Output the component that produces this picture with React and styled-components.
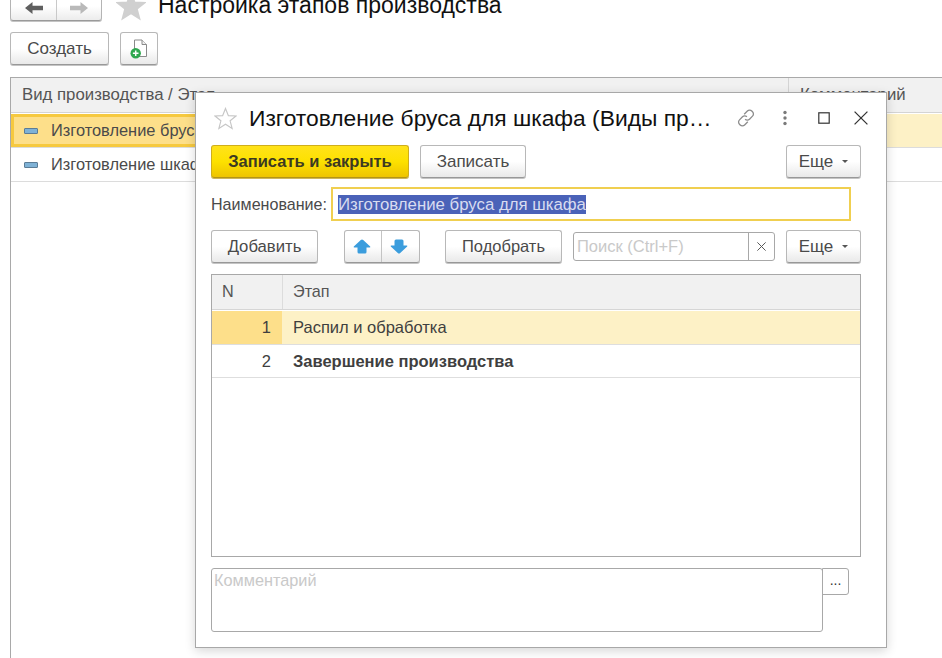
import React from "react";
import styled, { createGlobalStyle } from "styled-components";

const Global = createGlobalStyle`
  html, body { margin: 0; padding: 0; background: #fff; overflow: hidden; }
  body { font-family: "Liberation Sans", Arial, sans-serif; color: #4b4b4b; }
  * { box-sizing: border-box; }
`;

const Page = styled.div`
  position: relative;
  width: 942px;
  height: 658px;
  overflow: hidden;
  background: #fff;
`;

const Main = styled.div`
  display: flex;
  flex-direction: column;
  padding-left: 10px;
  margin-top: -12px;
`;

const TitleBar = styled.div`
  display: flex;
  align-items: center;
  height: 33px;
`;

const NavGroup = styled.div`
  display: flex;
  width: 92px;
  height: 33px;
  border: 1px solid #b4b4b4;
  border-bottom-color: #9a9a9a;
  border-radius: 3px;
  background: linear-gradient(#fff 55%, #ececec);
  box-shadow: 0 1px 0 #c4c4c4;
`;

const NavCell = styled.div`
  display: flex;
  align-items: center;
  justify-content: center;
  width: ${(p) => p.$w}px;
  padding-top: 6px;
  & + & { border-left: 1px solid #c9c9c9; }
`;

const MainTitle = styled.div`
  margin-left: 12px;
  font-size: 23px;
  color: #111;
  line-height: 33px;
  white-space: nowrap;
  transform: translateY(1px);
`;

const StarSlot = styled.div`
  display: flex;
  margin-left: 14px;
  margin-top: 3px;
`;

const CommandBar = styled.div`
  display: flex;
  gap: 11px;
  margin-top: 11px;
`;

const Button = styled.div`
  display: flex;
  align-items: center;
  justify-content: center;
  height: 33px;
  width: ${(p) => p.$w}px;
  font-size: ${(p) => p.$fs || 16.7}px;
  color: #4a4a4a;
  border: 1px solid #b8b8b8;
  border-bottom-color: #989898;
  border-radius: 3px;
  background: linear-gradient(#fff 50%, #e9e9e9);
  box-shadow: 0 1px 0 #c4c4c4;
  flex: none;
`;

const SpacedButton = styled(Button)`
  margin-left: ${(p) => p.$ml}px;
`;

const BackTable = styled.div`
  margin-top: 12px;
  width: 940px;
  height: 600px;
  border: 1px solid #a9a9a9;
  border-right: none;
  border-bottom: none;
`;

const BackHeader = styled.div`
  display: grid;
  grid-template-columns: 777px 1fr;
  height: 35px;
  background: #f1f1f1;
  border-bottom: 1px solid #d4d4d4;
  font-size: 16.8px;
  line-height: 33px;
  color: #555;
`;

const BackHeadCell = styled.div`
  padding-left: 11px;
  white-space: nowrap;
  & + & { border-left: 1px solid #d4d4d4; }
`;

const BackRow = styled.div`
  display: grid;
  grid-template-columns: 777px 1fr;
  height: 34px;
  border-bottom: 1px solid #dcdcdc;
  margin-top: ${(p) => (p.$first ? 1 : 0)}px;
  font-size: 16.4px;
  color: #4a4a4a;
`;

const BackName = styled.div`
  display: flex;
  align-items: center;
  gap: 13px;
  background: ${(p) => (p.$sel ? "#fddf8a" : "#fff")};
  border: ${(p) => (p.$sel ? "3px solid #f6c93f" : "none")};
  padding-left: ${(p) => (p.$sel ? 10 : 13)}px;
`;

const BackComment = styled.div`
  background: ${(p) => (p.$sel ? "#fdf1c6" : "#fff")};
`;

const Dash = styled.span`
  width: 14px;
  height: 6px;
  background: #7fb2d6;
  border: 1px solid #5b7c96;
  border-radius: 1px;
  flex: none;
`;

const Modal = styled.div`
  position: absolute;
  left: 195px;
  top: 92px;
  width: 692px;
  height: 556px;
  background: #fff;
  border: 1px solid #a8a8a8;
  box-shadow: 0 3px 10px rgba(0, 0, 0, 0.16);
  display: flex;
  flex-direction: column;
  padding: 0 25px 0 15px;
`;

const ModalHead = styled.div`
  display: flex;
  align-items: center;
  height: 50px;
  margin-bottom: 2px;
  margin-right: -25px;
`;

const ModalStar = styled.div`
  display: flex;
  margin-left: 3px;
  flex: none;
`;

const ModalTitle = styled.div`
  margin-left: 12px;
  width: 468px;
  flex: none;
  font-size: 22.8px;
  color: #111;
  white-space: nowrap;
  overflow: hidden;
  text-overflow: ellipsis;
`;

const HeadIcons = styled.div`
  display: flex;
  align-items: center;
  margin-left: 16px;
  flex: none;
`;

const IconSlot = styled.div`
  display: flex;
  align-items: center;
  justify-content: center;
  width: ${(p) => p.$w}px;
  flex: none;
`;

const Row = styled.div`
  display: flex;
  align-items: center;
  margin-top: ${(p) => p.$mt || 0}px;
`;

const PrimaryButton = styled(Button)`
  background: linear-gradient(#ffe21a 0%, #fde100 50%, #eec400 100%);
  border-color: #cfae1c;
  border-bottom-color: #b39416;
  color: #3c3a22;
  font-weight: bold;
  box-shadow: 0 1px 0 #cdb65a;
`;

const Spring = styled.div`
  flex: 1;
`;

const MoreCaret = styled.span`
  width: 0;
  height: 0;
  margin-left: 9px;
  border-left: 3px solid transparent;
  border-right: 3px solid transparent;
  border-top: 3px solid #555;
`;

const Label = styled.div`
  width: 120px;
  font-size: 16.1px;
  color: #4a4a4a;
  flex: none;
`;

const NameInput = styled.div`
  display: flex;
  align-items: center;
  width: 520px;
  height: 34px;
  border: 2px solid #f0cf50;
  padding-left: 5px;
  font-size: 16.8px;
`;

const Selected = styled.span`
  background: #4a62b8;
  color: #d8dcf0;
  line-height: 19px;
`;

const Group = styled.div`
  display: flex;
  width: 76px;
  height: 33px;
  margin-left: 26px;
  border: 1px solid #b8b8b8;
  border-bottom-color: #989898;
  border-radius: 3px;
  background: linear-gradient(#fff 50%, #e9e9e9);
  box-shadow: 0 1px 0 #c4c4c4;
`;

const GroupCell = styled.div`
  flex: 1;
  display: flex;
  align-items: center;
  justify-content: center;
  padding-right: 1px;
  & + & { border-left: 1px solid #c4c4c4; padding-right: 3px; }
`;

const Search = styled.div`
  display: flex;
  width: 202px;
  height: 29px;
  margin-left: 11px;
  border: 1px solid #a8a8a8;
  border-radius: 3px;
  font-size: 16.5px;
  color: #c9c9c9;
  flex: none;
`;

const SearchText = styled.div`
  flex: 1;
  padding-left: 3px;
  line-height: 27px;
  white-space: nowrap;
`;

const SearchClear = styled.div`
  width: 26px;
  display: flex;
  align-items: center;
  justify-content: center;
  border-left: 1px solid #a8a8a8;
`;

const Table = styled.div`
  margin-top: 11px;
  width: 650px;
  height: 283px;
  border: 1px solid #a8a8a8;
  display: flex;
  flex-direction: column;
`;

const THead = styled.div`
  display: grid;
  grid-template-columns: 70px 1fr;
  height: 35px;
  background: #f1f1f1;
  border-bottom: 1px solid #d6d6d6;
  font-size: 16.2px;
  line-height: 33px;
  color: #555;
`;

const THCell = styled.div`
  padding-left: 10px;
  & + & { border-left: 1px solid #dcdcdc; }
`;

const TRow = styled.div`
  display: grid;
  grid-template-columns: 70px 1fr;
  height: ${(p) => (p.$sel ? 34 : 33)}px;
  margin-top: ${(p) => (p.$sel ? 1 : 0)}px;
  border-bottom: 1px solid #dedede;
  font-size: 16.5px;
  line-height: 32px;
  color: #3f3f3f;
  font-weight: ${(p) => (p.$bold ? "bold" : "normal")};
`;

const NumCell = styled.div`
  text-align: right;
  padding-right: 11px;
  font-weight: normal;
  background: ${(p) => (p.$sel ? "#fddf8a" : "#fff")};
`;

const TextCell = styled.div`
  padding-left: 11px;
  background: ${(p) => (p.$sel ? "#fdf1c6" : "#fff")};
`;

const CommentRow = styled.div`
  display: flex;
  align-items: flex-start;
  margin-top: 11px;
`;

const CommentBox = styled.div`
  width: 612px;
  height: 64px;
  border: 1px solid #a8a8a8;
  border-radius: 3px;
  padding: 2px 0 0 2px;
  font-size: 16.3px;
  color: #c9c9c9;
`;

const DotsButton = styled.div`
  width: 27px;
  height: 27px;
  margin-left: -1px;
  border: 1px solid #a8a8a8;
  border-radius: 0 3px 3px 0;
  font-size: 14px;
  text-align: center;
  line-height: 22px;
  color: #333;
`;

const ArrowIcon = ({ flip, color }) => (
  <svg width="20" height="14" viewBox="0 0 20 14" style={{ transform: flip ? "scaleX(-1)" : "none" }}>
    <path d="M1 7 L8.5 1 V4.8 H19 V9.2 H8.5 V13 Z" fill={color} />
  </svg>
);

const Star = ({ size, filled }) => (
  <svg width={size} height={size} viewBox="0 0 24 24">
    <path
      d="M12 1.5 L15 9 L23 9.4 L16.8 14.4 L18.9 22.3 L12 17.9 L5.1 22.3 L7.2 14.4 L1 9.4 L9 9 Z"
      fill={filled ? "#d0d0d0" : "#fff"}
      stroke={filled ? "#d0d0d0" : "#c6c6c6"}
      strokeWidth="1.2"
    />
  </svg>
);

const NewDocIcon = () => (
  <svg width="18" height="20" viewBox="0 0 18 20">
    <path d="M4.5 1 H12 L16.5 5.5 V17.5 H4.5 Z" fill="#fff" stroke="#8a8a8a" />
    <path d="M12 1 V5.5 H16.5" fill="#eee" stroke="#8a8a8a" />
    <circle cx="5.7" cy="14.2" r="5.2" fill="#2fa84f" />
    <path d="M5.7 11.4 V17 M2.9 14.2 H8.5" stroke="#fff" strokeWidth="1.5" />
  </svg>
);

const BlockArrow = ({ down }) => (
  <svg width="18" height="15" viewBox="0 0 18 15" style={{ transform: down ? "rotate(180deg)" : "none" }}>
    <path d="M9 0.5 Q9.6 0.5 10.2 1 L17.2 7.4 Q17.8 8.5 16.6 8.5 H13.5 V13 Q13.5 14.5 12 14.5 H6 Q4.5 14.5 4.5 13 V8.5 H1.4 Q0.2 8.5 0.8 7.4 L7.8 1 Q8.4 0.5 9 0.5 Z" fill="#3b9ddd" />
  </svg>
);

const LinkIcon = () => (
  <svg width="20" height="20" viewBox="0 0 20 20" fill="none" stroke="#8c8c8c" strokeWidth="1.3">
    <path d="M8.2 6.3 L11.4 3 a3.1 3.1 0 0 1 4.4 0 l0.7 0.7 a3.1 3.1 0 0 1 0 4.4 L13.5 11.2 a3.1 3.1 0 0 1 -4.4 0" />
    <path d="M11.8 13.7 L8.6 17 a3.1 3.1 0 0 1 -4.4 0 l-0.7 -0.7 a3.1 3.1 0 0 1 0 -4.4 L6.5 8.8 a3.1 3.1 0 0 1 4.4 0" />
  </svg>
);

const DotsIcon = () => (
  <svg width="4" height="16" viewBox="0 0 4 16" fill="#7a7a7a">
    <circle cx="2" cy="2.5" r="1.7" />
    <circle cx="2" cy="8" r="1.7" />
    <circle cx="2" cy="13.5" r="1.7" />
  </svg>
);

const CloseIcon = ({ size, color, w }) => (
  <svg width={size} height={size} viewBox="0 0 12 12" stroke={color} strokeWidth={w} fill="none">
    <path d="M0.5 0.5 L11.5 11.5 M11.5 0.5 L0.5 11.5" />
  </svg>
);

const SquareIcon = () => (
  <svg width="12" height="12" viewBox="0 0 12 12" fill="none" stroke="#333" strokeWidth="1.2">
    <rect x="0.8" y="0.8" width="10.4" height="10.4" />
  </svg>
);

export default function App() {
  return (
    <Page>
      <Global />
      <Main>
        <TitleBar>
          <NavGroup>
            <NavCell $w={45}><ArrowIcon color="#5f5f5f" /></NavCell>
            <NavCell $w={45}><ArrowIcon flip color="#b9b9b9" /></NavCell>
          </NavGroup>
          <StarSlot><Star size={30} filled /></StarSlot>
          <MainTitle>Настройка этапов производства</MainTitle>
        </TitleBar>
        <CommandBar>
          <Button $w={99} $fs={17}>Создать</Button>
          <Button $w={38}><NewDocIcon /></Button>
        </CommandBar>
        <BackTable>
          <BackHeader>
            <BackHeadCell>Вид производства / Этап</BackHeadCell>
            <BackHeadCell>Комментарий</BackHeadCell>
          </BackHeader>
          <BackRow $first>
            <BackName $sel><Dash />Изготовление бруса для шкафа</BackName>
            <BackComment $sel />
          </BackRow>
          <BackRow>
            <BackName><Dash />Изготовление шкафа</BackName>
            <BackComment />
          </BackRow>
        </BackTable>
      </Main>

      <Modal>
        <ModalHead>
          <ModalStar><Star size={23} /></ModalStar>
          <ModalTitle>Изготовление бруса для шкафа (Виды производства)</ModalTitle>
          <HeadIcons>
            <IconSlot $w={26}><LinkIcon /></IconSlot>
            <IconSlot $w={52}><DotsIcon /></IconSlot>
            <IconSlot $w={26}><SquareIcon /></IconSlot>
            <IconSlot $w={48}><CloseIcon size={14} color="#333" w={1.1} /></IconSlot>
          </HeadIcons>
        </ModalHead>
        <Row>
          <PrimaryButton $w={198} $fs={16.5}>Записать и закрыть</PrimaryButton>
          <SpacedButton $w={106} $ml={11} $fs={17}>Записать</SpacedButton>
          <Spring />
          <Button $w={75} $fs={17}>Еще<MoreCaret /></Button>
        </Row>
        <Row $mt={9}>
          <Label>Наименование:</Label>
          <NameInput><Selected>Изготовление бруса для шкафа</Selected></NameInput>
        </Row>
        <Row $mt={9}>
          <Button $w={107}>Добавить</Button>
          <Group>
            <GroupCell><BlockArrow /></GroupCell>
            <GroupCell><BlockArrow down /></GroupCell>
          </Group>
          <SpacedButton $w={117} $ml={25} $fs={16.5}>Подобрать</SpacedButton>
          <Search>
            <SearchText>Поиск (Ctrl+F)</SearchText>
            <SearchClear><CloseIcon size={9} color="#555" w={1.3} /></SearchClear>
          </Search>
          <Spring />
          <Button $w={75} $fs={17}>Еще<MoreCaret /></Button>
        </Row>
        <Table>
          <THead>
            <THCell>N</THCell>
            <THCell>Этап</THCell>
          </THead>
          <TRow $sel>
            <NumCell $sel>1</NumCell>
            <TextCell $sel>Распил и обработка</TextCell>
          </TRow>
          <TRow $bold>
            <NumCell>2</NumCell>
            <TextCell>Завершение производства</TextCell>
          </TRow>
        </Table>
        <CommentRow>
          <CommentBox>Комментарий</CommentBox>
          <DotsButton>...</DotsButton>
        </CommentRow>
      </Modal>
    </Page>
  );
}
